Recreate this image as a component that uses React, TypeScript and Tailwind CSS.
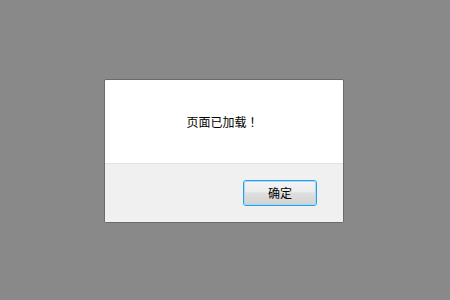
import React from 'react';

const App: React.FC = () => {
  return (
    <div
      className="w-[450px] h-[300px] bg-[#898989] pt-[79px] pl-[104px]"
      style={{ fontFamily: '"Noto Sans CJK SC", "Noto Sans", sans-serif' }}
    >
      {/* Alert dialog */}
      <div className="w-[240px] border border-[#6b6b6b] rounded-[2px] overflow-hidden bg-white">
        <div className="h-[83px] flex items-center justify-center text-[12px] text-black">
          页面已加载<span className="ml-[3px]">！</span>
        </div>
        <div className="h-[59px] border-t border-[#e3e3e3] bg-[#f0f0f0] flex items-center justify-end pr-[26px]">
          <button className="w-[74px] h-[26px] rounded-[3px] border border-[#2f9be0] p-0">
            <span className="flex items-center justify-center w-full h-full rounded-[2px] border border-[#9fdcf7] bg-[linear-gradient(to_bottom,#f3f3f3_0%,#ececec_45%,#dedede_50%,#d4d4d4_100%)] text-[12px] text-black">
              确定
            </span>
          </button>
        </div>
      </div>
    </div>
  );
};

export default App;
